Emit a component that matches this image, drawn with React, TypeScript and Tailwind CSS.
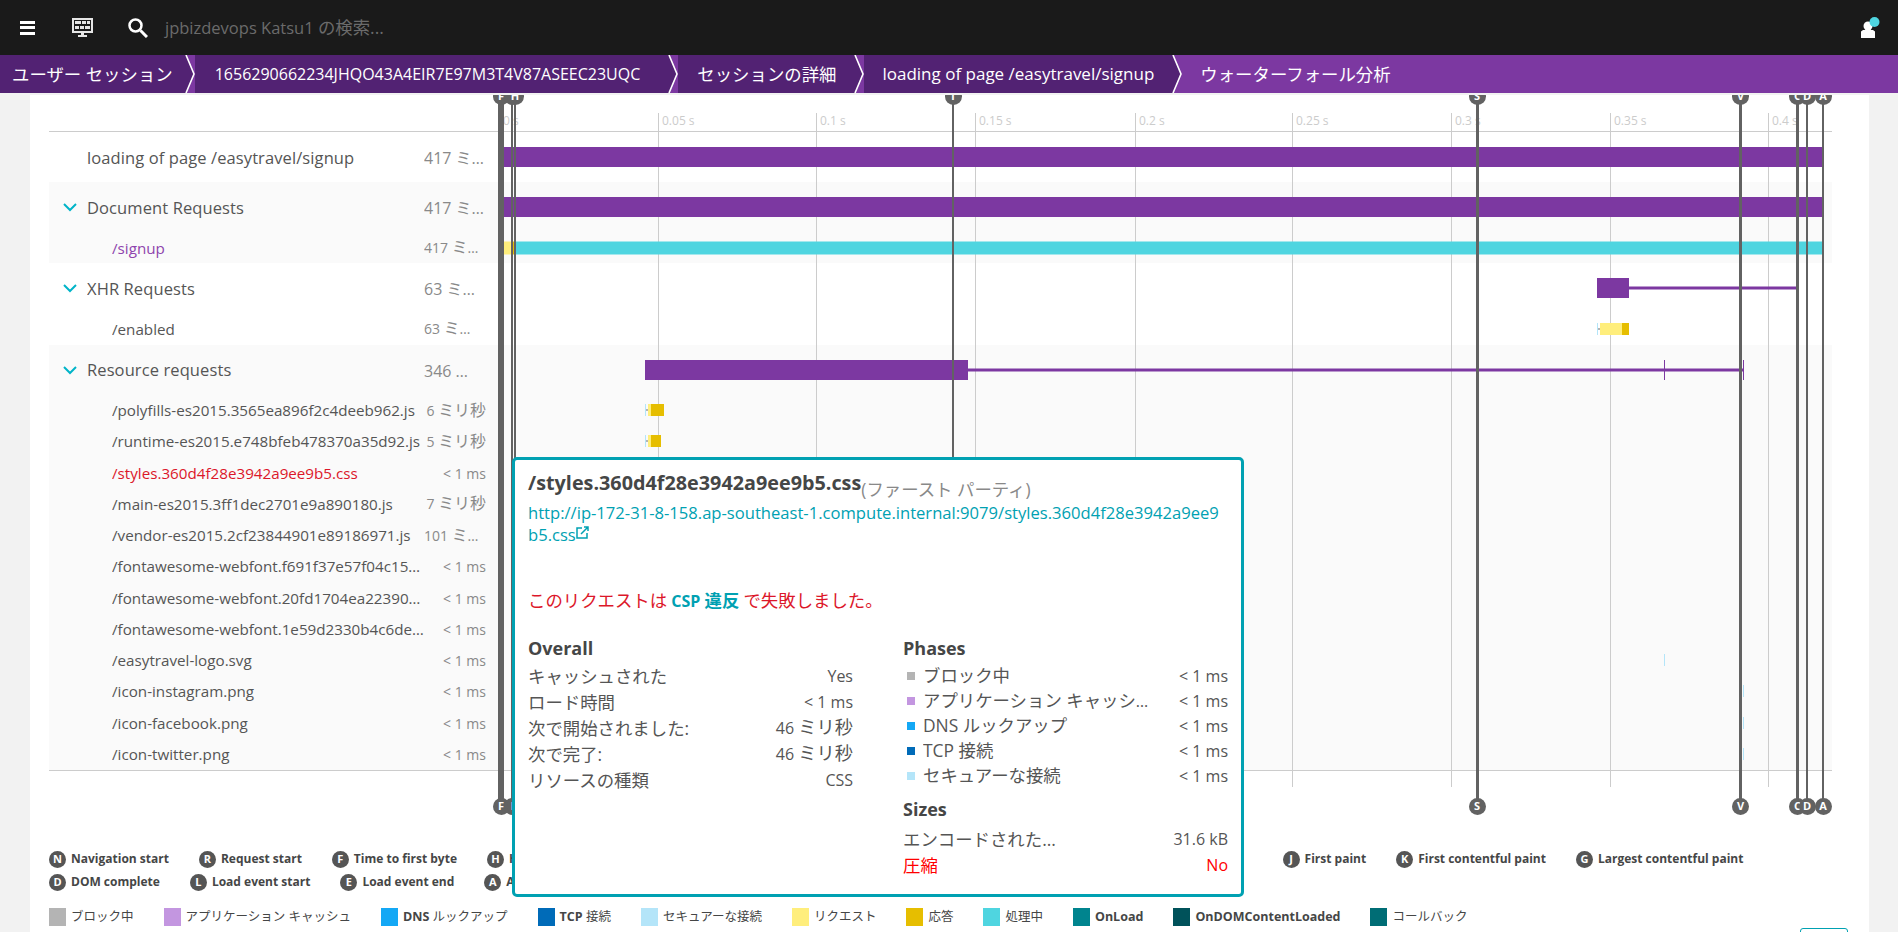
import type { ReactNode } from 'react';

const TABLE_LEFT = 49;
const CHART_LEFT = 504;

const ticks = [
    { x: 499, label: '0 s' },
    { x: 658, label: '0.05 s' },
    { x: 816, label: '0.1 s' },
    { x: 975, label: '0.15 s' },
    { x: 1135, label: '0.2 s' },
    { x: 1292, label: '0.25 s' },
    { x: 1451, label: '0.3 s' },
    { x: 1610, label: '0.35 s' },
    { x: 1768, label: '0.4 s' },
];

const pins = [
    { x: 501, w: 6, label: 'F' },
    { x: 512, w: 2, label: 'R' },
    { x: 515, w: 2, label: 'H' },
    { x: 953, w: 2, label: 'T' },
    { x: 1477, w: 3, label: 'S' },
    { x: 1740.5, w: 3, label: 'V' },
    { x: 1797.5, w: 3, label: 'C' },
    { x: 1807, w: 2, label: 'D' },
    { x: 1823, w: 2, label: 'A' },
];

type Seg = { x1: number; x2: number; cls: string };

const PURPLE_BAR = 'h-5 bg-[#7c38a1]';
const PURPLE_LINE = 'h-[3px] bg-[#7c38a1]';
const PURPLE_TICK = 'h-5 bg-[#7c38a1]';
const LIGHT_TICK = 'h-3 bg-[#b4e5f9]';
const GRAY_TICK = 'h-[2px] bg-[#b4b4b4]';
const YELLOW = 'h-3 bg-[#ffee7c]';
const GOLD = 'h-3 bg-[#e6be00]';

function Ms({ n }: { n: string }) {
    return (
        <>
            {n} <span className="text-[1.14em]">ミリ秒</span>
        </>
    );
}

// row durations that don't fit get cut off after the first kana
function CutMs({ n }: { n: string }) {
    return (
        <span className="inline-block w-[58px] mr-[4px] truncate text-left align-bottom">
            <Ms n={n} />
        </span>
    );
}

function Jp({ children }: { children: ReactNode }) {
    return <span className="text-[17.4px]">{children}</span>;
}

function Chevron() {
    return (
        <svg className="w-4 h-4 text-[#00b4c8]" viewBox="0 0 16 16" fill="none" stroke="currentColor" strokeWidth={2}>
            <path d="M2 5l6 6 6-6" />
        </svg>
    );
}

function Row({ name, dur, segs, group, nameCls }: { name: string; dur: ReactNode; segs: Seg[]; group?: boolean; nameCls?: string }) {
    return (
        <div className={`flex items-center ${group !== undefined ? 'h-[50px]' : 'h-[31.25px]'}`}>
            {group !== undefined ? (
                <>
                    <div className="w-[38px] pl-[13px] shrink-0">{group && <Chevron />}</div>
                    <div className="w-[337px] pt-[2px] shrink-0 text-[16.5px] tracking-[0.1px] text-[#555555] truncate">{name}</div>
                    <div className="w-[62px] pt-[2px] shrink-0 text-[16px] text-[#898989] truncate">{dur}</div>
                </>
            ) : (
                <>
                    <div className={`ml-[63px] w-[312px] pt-px shrink-0 text-[15.2px] truncate ${nameCls ?? 'text-[#555555]'}`}>{name}</div>
                    <div className="w-[62px] pt-px shrink-0 text-[14px] text-[#898989] text-right truncate">{dur}</div>
                </>
            )}
            <div className="ml-[18px] flex-1 self-stretch relative">
                {segs.map((s) => (
                    <div
                        key={`${s.x1}-${s.cls}`}
                        className={`absolute z-20 top-1/2 -translate-y-1/2 ${s.cls}`}
                        style={{ left: s.x1 - CHART_LEFT, width: s.x2 - s.x1 }}
                    />
                ))}
            </div>
        </div>
    );
}

const resourceRows: { name: string; dur: ReactNode; segs: Seg[]; nameCls?: string }[] = [
    {
        name: '/polyfills-es2015.3565ea896f2c4deeb962.js',
        dur: <Ms n="6" />,
        segs: [
            { x1: 645, x2: 646, cls: LIGHT_TICK },
            { x1: 646, x2: 648, cls: GRAY_TICK },
            { x1: 648, x2: 651, cls: YELLOW },
            { x1: 651, x2: 664, cls: GOLD },
        ],
    },
    {
        name: '/runtime-es2015.e748bfeb478370a35d92.js',
        dur: <Ms n="5" />,
        segs: [
            { x1: 645, x2: 646, cls: LIGHT_TICK },
            { x1: 646, x2: 648, cls: GRAY_TICK },
            { x1: 648, x2: 651, cls: YELLOW },
            { x1: 651, x2: 661, cls: GOLD },
        ],
    },
    { name: '/styles.360d4f28e3942a9ee9b5.css', dur: '< 1 ms', segs: [], nameCls: 'text-[#dc172a]' },
    { name: '/main-es2015.3ff1dec2701e9a890180.js', dur: <Ms n="7" />, segs: [] },
    { name: '/vendor-es2015.2cf23844901e89186971.js', dur: <CutMs n="101" />, segs: [] },
    { name: '/fontawesome-webfont.f691f37e57f04c152e2b.woff2', dur: '< 1 ms', segs: [] },
    { name: '/fontawesome-webfont.20fd1704ea223900efa9.woff2', dur: '< 1 ms', segs: [] },
    { name: '/fontawesome-webfont.1e59d2330b4c6deb84b3.ttf', dur: '< 1 ms', segs: [] },
    { name: '/easytravel-logo.svg', dur: '< 1 ms', segs: [{ x1: 1664, x2: 1665, cls: LIGHT_TICK }] },
    { name: '/icon-instagram.png', dur: '< 1 ms', segs: [{ x1: 1743, x2: 1744, cls: LIGHT_TICK }] },
    { name: '/icon-facebook.png', dur: '< 1 ms', segs: [{ x1: 1743, x2: 1744, cls: LIGHT_TICK }] },
    { name: '/icon-twitter.png', dur: '< 1 ms', segs: [{ x1: 1743, x2: 1744, cls: LIGHT_TICK }] },
];

const legendTop = [
    ['N', 'Navigation start'],
    ['R', 'Request start'],
    ['F', 'Time to first byte'],
    ['H', 'HTML downloaded'],
    ['T', 'Time to interactive'],
    ['C', 'DOM content loaded'],
    ['S', 'Speed index'],
    ['V', 'Visually complete'],
    ['J', 'First paint'],
    ['K', 'First contentful paint'],
    ['G', 'Largest contentful paint'],
];

const legendBottom = [
    ['D', 'DOM complete'],
    ['L', 'Load event start'],
    ['E', 'Load event end'],
    ['A', 'Action duration'],
];

const phaseLegend: { cls: string; label: ReactNode; id: string; bold?: boolean }[] = [
    { id: 'blocked', cls: 'bg-[#b4b4b4]', label: 'ブロック中' },
    { id: 'cache', cls: 'bg-[#c396e0]', label: 'アプリケーション キャッシュ' },
    { id: 'dns', cls: 'bg-[#14a8f5]', label: <><b>DNS</b> ルックアップ</> },
    { id: 'tcp', cls: 'bg-[#006bb8]', label: <><b>TCP</b> 接続</> },
    { id: 'ssl', cls: 'bg-[#b4e5f9]', label: 'セキュアーな接続' },
    { id: 'request', cls: 'bg-[#ffee7c]', label: 'リクエスト' },
    { id: 'response', cls: 'bg-[#e6be00]', label: '応答' },
    { id: 'processing', cls: 'bg-[#4fd5e0]', label: '処理中' },
    { id: 'onload', cls: 'bg-[#00848e]', label: 'OnLoad', bold: true },
    { id: 'ondom', cls: 'bg-[#00525a]', label: 'OnDOMContentLoaded', bold: true },
    { id: 'callback', cls: 'bg-[#006d75]', label: 'コールバック' },
];

const phases = [
    ['bg-[#b4b4b4]', 'ブロック中'],
    ['bg-[#c396e0]', 'アプリケーション キャッシュ'],
    ['bg-[#14a8f5]', 'DNS ルックアップ'],
    ['bg-[#006bb8]', 'TCP 接続'],
    ['bg-[#b4e5f9]', 'セキュアーな接続'],
];

const overall = [
    ['キャッシュされた', 'Yes'],
    ['ロード時間', '< 1 ms'],
    ['次で開始されました:', '46 ミリ秒'],
    ['次で完了:', '46 ミリ秒'],
    ['リソースの種類', 'CSS'],
];

function KeyDot({ letter }: { letter: string }) {
    return (
        <span className="w-[17px] h-[17px] rounded-full bg-[#555555] text-white text-[11px] font-bold flex items-center justify-center shrink-0">
            {letter}
        </span>
    );
}

function MonitorIcon() {
    return (
        <svg className="w-[21px] h-[19px]" viewBox="0 0 21 19">
            <rect x="0" y="0" width="21" height="15" fill="#e6e6e6" />
            <rect x="2" y="2" width="17" height="11" fill="#1a1a1a" />
            <rect x="3" y="3" width="6" height="3" fill="#e6e6e6" />
            <rect x="10" y="3" width="4" height="3" fill="#e6e6e6" />
            <rect x="15" y="3" width="3" height="3" fill="#e6e6e6" />
            <rect x="3" y="8" width="4" height="3" fill="#e6e6e6" />
            <rect x="8" y="8" width="4" height="3" fill="#e6e6e6" />
            <rect x="13" y="8" width="5" height="3" fill="#e6e6e6" />
            <rect x="9" y="15" width="3" height="2" fill="#e6e6e6" />
            <rect x="6" y="17" width="9" height="2" fill="#e6e6e6" />
        </svg>
    );
}

function CrumbEnd() {
    return (
        <svg className="w-[10px] h-[38px] bg-[#7c38a1]" viewBox="0 0 10 38">
            <path d="M0 0h1l8 19-8 19H0z" fill="#522273" />
            <path d="M1 0l8 19-8 19" fill="none" stroke="white" strokeWidth={1.6} />
        </svg>
    );
}

export default function App() {
    return (
        <div className="relative h-[932px] overflow-hidden bg-[#f2f2f2] font-['Open_Sans','Noto_Sans_CJK_JP',sans-serif]">
            <header className="h-[55px] bg-[#1a1a1a] flex items-center">
                <div className="ml-5 w-[15px] flex flex-col gap-[2.5px]">
                    <span className="h-[3px] bg-white" />
                    <span className="h-[3px] bg-white" />
                    <span className="h-[3px] bg-white" />
                </div>
                <div className="ml-[37px]">
                    <MonitorIcon />
                </div>
                <svg className="ml-[35px] w-5 h-5" viewBox="0 0 20 20" fill="none" stroke="white">
                    <circle cx="7.5" cy="7.5" r="6" strokeWidth={2.5} />
                    <path d="M12.5 12.5L19 19" strokeWidth={3} />
                </svg>
                <span className="ml-[17px] text-[16.5px] text-[#6b6b6b]">
                    jpbizdevops Katsu1 <Jp>の検索...</Jp>
                </span>
                <svg className="ml-auto mr-[18px] w-5 h-6" viewBox="0 0 20 24">
                    <circle cx="8" cy="10" r="4.5" fill="white" />
                    <path d="M1 22v-6.5l2-1.5h10l2 1.5V22z" fill="white" />
                    <circle cx="14.5" cy="6" r="5" fill="#4fd5e0" />
                </svg>
            </header>

            <nav className="h-[38px] flex bg-[#7c38a1] text-white text-[16px] leading-[38px]">
                <div className="flex bg-[#522273]">
                    <span className="pl-3 pr-[12px]"><Jp>ユーザー セッション</Jp></span>
                    <CrumbEnd />
                </div>
                <div className="flex bg-[#522273]">
                    <span className="pl-[20px] pr-[28px]">1656290662234JHQO43A4EIR7E97M3T4V87ASEEC23UQC</span>
                    <CrumbEnd />
                </div>
                <div className="flex bg-[#522273]">
                    <span className="pl-[19px] pr-[18px]"><Jp>セッションの詳細</Jp></span>
                    <CrumbEnd />
                </div>
                <div className="flex bg-[#522273]">
                    <span className="pl-[18px] pr-[18px] text-[17px]">loading of page /easytravel/signup</span>
                    <CrumbEnd />
                </div>
                <span className="pl-[18px]">
                    <Jp>ウォーターフォール分析</Jp>
                </span>
            </nav>

            <main className="mt-[2px] ml-[30px] w-[1839px] h-[837px] bg-white pl-[19px] pr-[21px]">
                <div className="relative h-[721px] mr-[16px]">
                    <div className="h-[37px] border-b border-[#cccccc]" />
                    <Row name="loading of page /easytravel/signup" group={false} dur="417 ミリ秒" segs={[{ x1: 504, x2: 1823, cls: PURPLE_BAR }]} />
                    <div className="bg-[#fafafa]">
                        <Row name="Document Requests" group dur="417 ミリ秒" segs={[{ x1: 504, x2: 1823, cls: PURPLE_BAR }]} />
                        <Row
                            name="/signup"
                            nameCls="text-[#8e44ad]"
                            dur={<CutMs n="417" />}
                            segs={[
                                { x1: 504, x2: 512, cls: 'h-[13px] bg-[#ffee7c]' },
                                { x1: 512, x2: 516, cls: 'h-[13px] bg-[#e6be00]' },
                                { x1: 516, x2: 1823, cls: 'h-[13px] bg-[#4fd5e0]' },
                            ]}
                        />
                    </div>
                    <Row
                        name="XHR Requests"
                        group
                        dur={<span className="inline-block w-[54px] truncate align-bottom">63 ミリ秒</span>}
                        segs={[
                            { x1: 1597, x2: 1629, cls: PURPLE_BAR },
                            { x1: 1629, x2: 1796, cls: PURPLE_LINE },
                        ]}
                    />
                    <Row
                        name="/enabled"
                        dur={<CutMs n="63" />}
                        segs={[
                            { x1: 1597, x2: 1598, cls: LIGHT_TICK },
                            { x1: 1598, x2: 1600, cls: GRAY_TICK },
                            { x1: 1600, x2: 1622, cls: YELLOW },
                            { x1: 1622, x2: 1629, cls: GOLD },
                        ]}
                    />
                    <div className="bg-[#fafafa] border-b border-[#cccccc]">
                        <Row
                            name="Resource requests"
                            group
                            dur={<span className="inline-block w-[46px] truncate align-bottom">346 ミリ秒</span>}
                            segs={[
                                { x1: 645, x2: 968, cls: PURPLE_BAR },
                                { x1: 968, x2: 1743, cls: PURPLE_LINE },
                                { x1: 1664, x2: 1665, cls: PURPLE_TICK },
                                { x1: 1743, x2: 1744, cls: PURPLE_TICK },
                            ]}
                        />
                        {resourceRows.map((r) => (
                            <Row key={r.name} name={r.name} dur={r.dur} segs={r.segs} nameCls={r.nameCls} />
                        ))}
                    </div>

                    {/* time grid */}
                    <div className="absolute z-10 inset-x-0 top-[18px] h-[674px] pointer-events-none">
                        {ticks.map((t) => (
                            <div key={t.label} className="absolute top-0 bottom-0 w-px bg-[#cccccc]" style={{ left: t.x - TABLE_LEFT }}>
                                <span className="absolute left-[4px] top-0 text-[12px] leading-[16px] text-[#cccccc] whitespace-nowrap">{t.label}</span>
                            </div>
                        ))}
                    </div>

                    {/* milestone pins */}
                    <div className="absolute z-30 inset-0 overflow-hidden pointer-events-none">
                        {pins.map((p) => (
                            <div key={p.label}>
                                <div className="absolute top-[2px] h-[710px] bg-[#626262]" style={{ left: p.x - TABLE_LEFT - p.w / 2, width: p.w }} />
                                {[-7, 703].map((top) => (
                                    <span
                                        key={top}
                                        className="absolute w-[17px] h-[17px] rounded-full bg-[#626262] text-white text-[11px] font-bold flex items-center justify-center"
                                        style={{ left: p.x - TABLE_LEFT - 8.5, top }}
                                    >
                                        {p.label}
                                    </span>
                                ))}
                            </div>
                        ))}
                    </div>
                </div>

                <div className="mt-[34px] flex flex-col gap-[5px] text-[12px] font-bold text-[#454646]">
                    {[legendTop, legendBottom].map((line) => (
                        <div key={line[0][0]} className="flex gap-[30px]">
                            {line.map(([k, label]) => (
                                <span key={k} className={`flex items-center gap-[5px] whitespace-nowrap ${k === 'V' ? 'mr-[9px]' : ''}`}>
                                    <KeyDot letter={k} />
                                    {label}
                                </span>
                            ))}
                        </div>
                    ))}
                </div>

                <div className="mt-[17px] flex gap-[30px] text-[12.5px] text-[#454646]">
                    {phaseLegend.map((p) => (
                        <span key={p.id} className={`flex items-center gap-[5px] whitespace-nowrap ${p.bold ? 'font-bold' : ''}`}>
                            <span className={`w-[17px] h-[18px] ${p.cls}`} />
                            <span>{p.label}</span>
                        </span>
                    ))}
                </div>
                <div className="mt-[1px] ml-auto w-[48px] h-8 rounded-[3px] border border-[#00a1b2]" />
            </main>

            {/* request details popover */}
            <section className="absolute z-40 left-[512px] top-[457px] w-[732px] h-[440px] bg-white border-[3px] border-[#00a1b2] rounded-[5px] pl-[13px] pr-[13px] pt-[10px] text-[16px] text-[#555555]">
                <div className="flex items-end h-[26px]">
                    <span className="font-bold text-[19.8px] leading-[26px] text-[#454646]">/styles.360d4f28e3942a9ee9b5.css</span>
                    <span className="text-[#898989] -mb-[6px]">
                        <Jp>(ファースト パーティ)</Jp>
                    </span>
                </div>
                <a className="mt-[6px] block h-[44px] text-[16.6px] leading-[22px] text-[#00a1b2] break-all">
                    http://ip-172-31-8-158.ap-southeast-1.compute.internal:9079/styles.360d4f28e3942a9ee9b5.css
                    <svg className="inline-block w-[13px] h-[13px] align-[2px]" viewBox="0 0 13 13" fill="none" stroke="currentColor" strokeWidth={1.5}>
                        <path d="M6 2H1v10h10V7" />
                        <path d="M5 8l7-7M8 1h4v4" />
                    </svg>
                </a>
                <p className="mt-[42px] text-[#dc172a] leading-[24px]">
                    <Jp>このリクエストは</Jp> <b className="text-[#00a1b2]">CSP <Jp>違反</Jp></b> <Jp>で失敗しました。</Jp>
                </p>
                <div className="mt-[23px] flex gap-[50px]">
                    <div className="w-[325px]">
                        <h3 className="font-bold text-[18px] text-[#454646] leading-[24px]">Overall</h3>
                        <div className="mt-[3px]">
                            {overall.map(([k, v]) => (
                                <div key={k} className="h-[26px] flex items-center justify-between">
                                    <Jp>{k}</Jp>
                                    <span className="text-[#555555]">
                                        {v.includes('ミリ秒') ? <Ms n="46" /> : v}
                                    </span>
                                </div>
                            ))}
                        </div>
                    </div>
                    <div className="w-[325px]">
                        <h3 className="font-bold text-[18px] text-[#454646] leading-[24px]">Phases</h3>
                        <div className="mt-[3px]">
                            {phases.map(([cls, k]) => (
                                <div key={k} className="h-[25px] flex items-center">
                                    <span className={`ml-[4px] w-[8px] h-[8px] shrink-0 ${cls}`} />
                                    <span className="ml-[8px] w-[229px] truncate"><Jp>{k}</Jp></span>
                                    <span className="ml-auto whitespace-nowrap">{'< 1 ms'}</span>
                                </div>
                            ))}
                        </div>
                        <h3 className="mt-[9px] font-bold text-[18px] text-[#454646] leading-[24px]">Sizes</h3>
                        <div className="mt-[5px] h-[26px] flex items-center justify-between">
                            <Jp>エンコードされた...</Jp>
                            <span>31.6 kB</span>
                        </div>
                        <div className="h-[26px] flex items-center justify-between text-[#ff0000]">
                            <Jp>圧縮</Jp>
                            <span>No</span>
                        </div>
                    </div>
                </div>
            </section>
        </div>
    );
}
